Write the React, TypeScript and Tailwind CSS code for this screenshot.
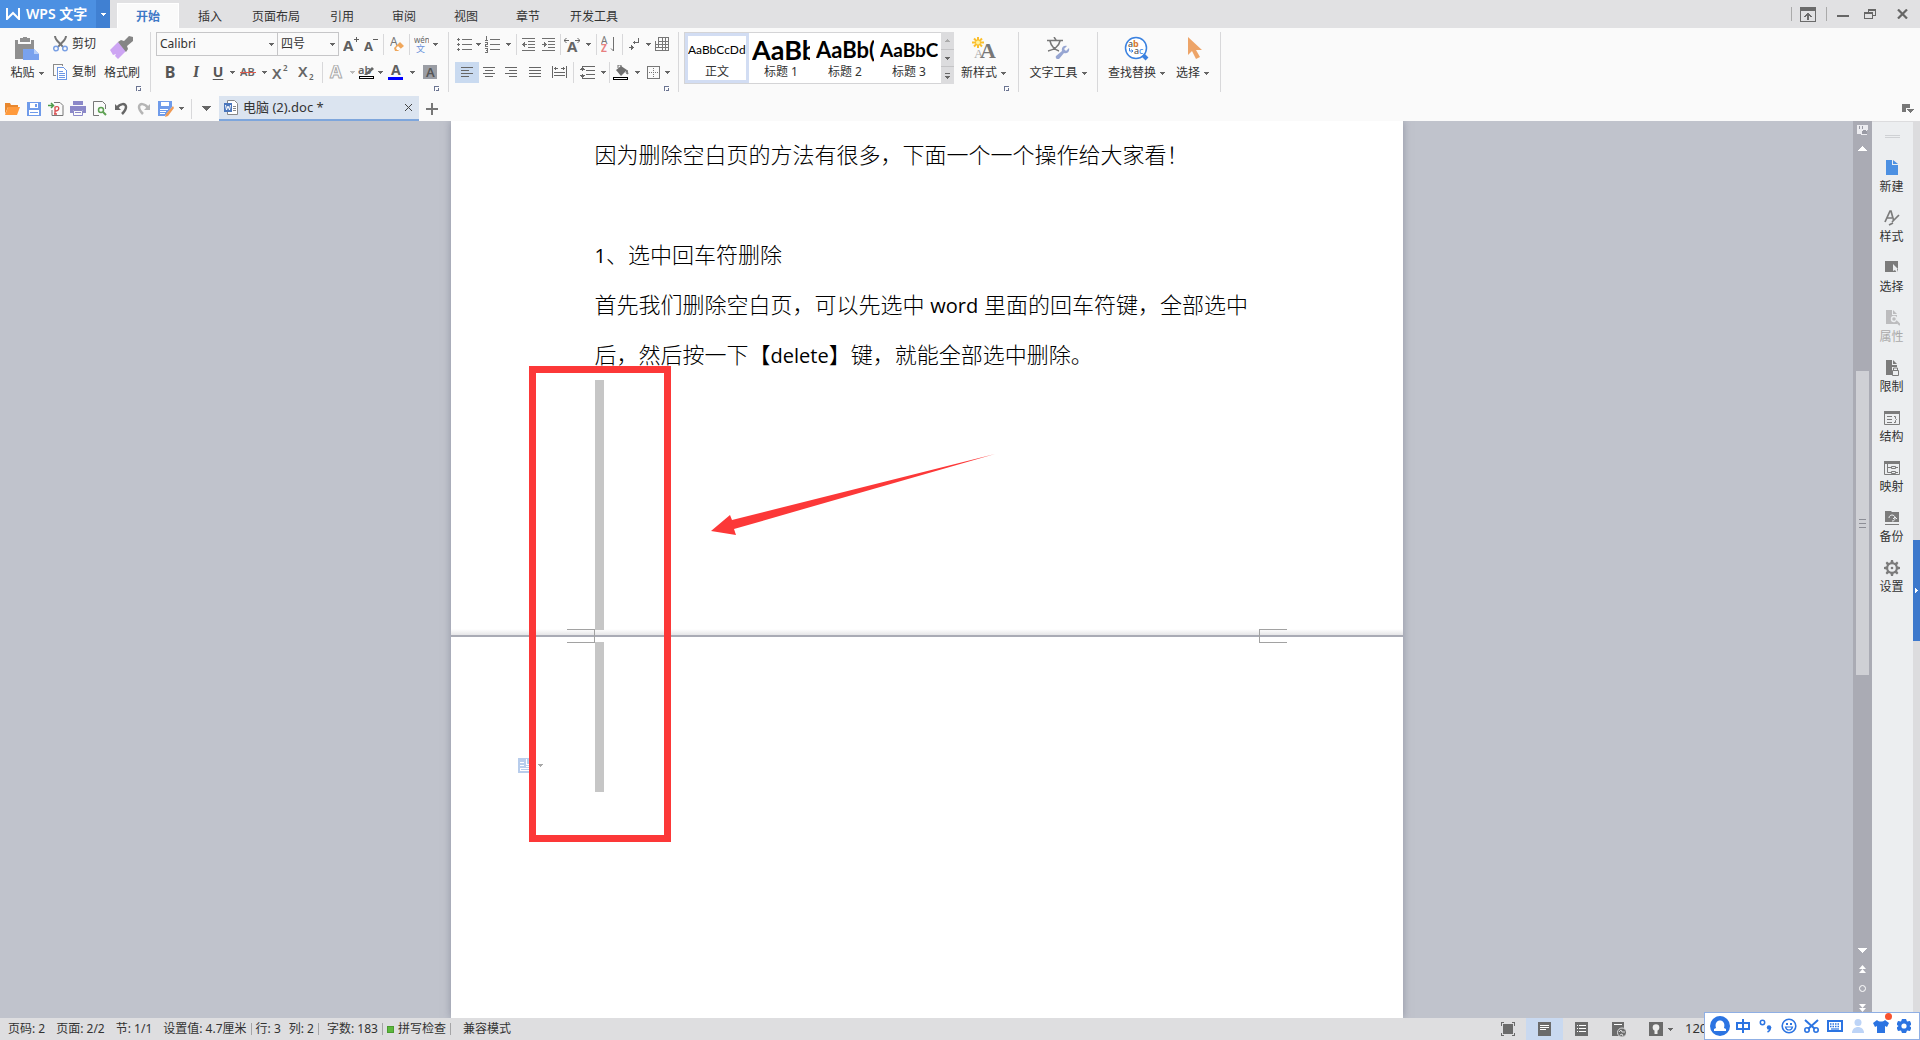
import type { ReactNode } from 'react';
import clsx from 'clsx';

const tabs = [
  { name: '开始', active: true },
  { name: '插入' },
  { name: '页面布局', wide: true },
  { name: '引用' },
  { name: '审阅' },
  { name: '视图' },
  { name: '章节' },
  { name: '开发工具', wide: true },
];

interface SvgProps {
  w: number;
  h: number;
  crisp?: boolean;
  className?: string;
  children: ReactNode;
}

function Svg({ w, h, crisp, className, children }: SvgProps) {
  return (
    <svg
      width={w}
      height={h}
      viewBox={`0 0 ${w} ${h}`}
      shapeRendering={crisp ? 'crispEdges' : undefined}
      fill="none"
      className={clsx('shrink-0', className)}
      aria-hidden="true"
    >
      {children}
    </svg>
  );
}

function Caret({ color = '#666' }: { color?: string }) {
  return (
    <Svg w={5} h={3} crisp>
      <path d="M0 0h5v1H0zM1 1h3v1H1zM2 2h1v1H2z" fill={color} />
    </Svg>
  );
}

function Tool({ label, className, children }: { label: string; className: string; children: ReactNode }) {
  return (
    <button type="button" aria-label={label} className={clsx('flex h-[21px] shrink-0 items-center justify-center', className)}>
      {children}
    </button>
  );
}

function More({ wide, faded }: { wide?: boolean; faded?: boolean }) {
  return (
    <Tool label="更多" className={wide ? 'w-3' : 'w-2'}>
      <Caret color={faded ? '#bbb' : '#666'} />
    </Tool>
  );
}

function Bar({ wide }: { wide?: boolean }) {
  return (
    <div className={clsx('flex h-[21px] shrink-0 justify-center', wide ? 'w-2' : 'w-1')}>
      <div className="w-px bg-[#d8d8da]" />
    </div>
  );
}

function Group({ className, launcher, children }: { className: string; launcher?: boolean; children: ReactNode }) {
  return (
    <div className={clsx('flex h-[60px] shrink-0 flex-col border-r border-[#d8d8da]', className)}>
      <div className="flex h-[53px] items-start">{children}</div>
      {launcher && (
        <button type="button" aria-label="对话框" className="mt-px mr-2 self-end">
          <Svg w={6} h={6} crisp>
            <path d="M0 0h5v1H1v4H0zM4 2h1v3H2V4h2z" fill="#6a7391" />
          </Svg>
        </button>
      )}
    </div>
  );
}

function BigButton({ label, caret, icon, className }: { label: string; caret?: boolean; icon: ReactNode; className?: string }) {
  return (
    <button type="button" className={clsx('flex shrink-0 flex-col items-center pt-1', className)}>
      <span className="flex h-6 items-center justify-center">{icon}</span>
      <span className="mt-[5px] flex items-center gap-1 leading-4 whitespace-nowrap">
        {label}
        {caret && <Caret />}
      </span>
    </button>
  );
}

function Combo({ label, value, options, className }: { label: string; value: string; options: string[]; className: string }) {
  return (
    <div className={clsx('relative h-6', className)}>
      <select
        aria-label={label}
        defaultValue={value}
        className="h-6 w-full appearance-none border border-[#c6c6c8] bg-[#fafafa] pl-[3px] text-[#333] outline-none"
      >
        {options.map((o) => (
          <option key={o}>{o}</option>
        ))}
      </select>
      <span className="pointer-events-none absolute top-[11px] right-1">
        <Caret />
      </span>
    </div>
  );
}

function TitleBar() {
  return (
    <header className="flex h-7 shrink-0 bg-[#e1e1e3]">
      <button type="button" className="flex w-24 items-center gap-[6px] bg-[#4c90e2] pl-[6px] text-sm font-semibold text-white">
        <Svg w={14} h={12}>
          <path d="M1 0v11l6-6 6 6V0" stroke="#fff" strokeWidth="2" />
        </Svg>
        <span className="whitespace-nowrap">WPS 文字</span>
      </button>
      <button type="button" aria-label="主菜单" className="flex w-[14px] items-center justify-center bg-[#4080d2]">
        <Caret color="#fff" />
      </button>
      <nav className="ml-[7px] flex items-end">
        {tabs.map((tab) => (
          <button
            key={tab.name}
            type="button"
            className={clsx(
              'flex h-[25px] items-center justify-center pt-[2px] whitespace-nowrap',
              tab.wide ? 'w-[70px]' : 'w-[62px]',
              tab.active ? 'border-x border-t border-white bg-[#fafafa] font-bold text-[#3d78c6]' : 'text-[#333]',
            )}
          >
            {tab.name}
          </button>
        ))}
      </nav>
      <div className="ml-auto flex items-center">
        <div className="h-[14px] w-px bg-[#aaa]" />
        <button type="button" aria-label="隐藏功能区" className="mr-[10px] ml-2">
          <Svg w={16} h={15} crisp>
            <path d="M.5 .5h15v14H.5z" stroke="#6b6b6b" />
            <path d="M0 0h16v4H0zM7 6h2v7H7zM6 7h4v1H6zM5 8h6v1H5zM4 9h2v1H4zM10 9h2v1h-2z" fill="#6b6b6b" />
          </Svg>
        </button>
        <div className="h-[14px] w-px bg-[#aaa]" />
        <button type="button" aria-label="最小化" className="ml-[10px] flex h-[14px] items-center">
          <Svg w={12} h={10} crisp>
            <path d="M0 6h12v2H0z" fill="#666" />
          </Svg>
        </button>
        <button type="button" aria-label="还原" className="ml-[15px]">
          <Svg w={12} h={10} crisp>
            <path d="M4 0h8v7H9V6h2V2H5v1H4zM0 3h9v7H0zM1 5v4h7V5z" fill="#666" fillRule="evenodd" />
          </Svg>
        </button>
        <button type="button" aria-label="关闭" className="mr-3 ml-[21px]">
          <Svg w={11} h={10}>
            <path d="M1 .5l9 9M10 .5l-9 9" stroke="#666" strokeWidth="2.200" />
          </Svg>
        </button>
      </div>
    </header>
  );
}

function ClipboardGroup() {
  return (
    <Group launcher className="w-[151px] pl-2">
      <BigButton
        label="粘贴"
        caret
        className="w-[38px]"
        icon={
          <Svg w={24} h={23}>
            <path d="M0 3h3v4h13V3h3v9H9v10H0z" fill="#8f8f8f" />
            <path d="M5 1h3V0h4v1h3v4H5z" fill="#8f8f8f" />
            <path d="M8 12h11l5 5v6H8z" fill="#79a2ee" />
            <path d="M19 12v5h5z" fill="#b9d0f8" />
          </Svg>
        }
      />
      <div className="mr-2 ml-[7px] flex flex-col gap-1">
        <button type="button" className="flex h-6 items-center gap-1 whitespace-nowrap">
          <Svg w={15} h={16}>
            <path d="M2 0c0 4 4 6 8 11M13 0c0 4-4 6-8 11" stroke="#757575" strokeWidth="2" />
            <circle cx="3" cy="12.500" r="2.300" stroke="#7aa0e4" strokeWidth="1.500" />
            <circle cx="12" cy="12.500" r="2.300" stroke="#7aa0e4" strokeWidth="1.500" />
          </Svg>
          剪切
        </button>
        <button type="button" className="flex h-6 items-center gap-1 whitespace-nowrap">
          <Svg w={15} h={16} crisp>
            <path d="M9.500 2V.5h-9v11H3" stroke="#8a8a8a" />
            <path d="M4.500 3.500h6l3 3v9h-9z" fill="#fff" stroke="#6d97e4" />
            <path d="M6 7.500h4M6 9.500h6M6 11.500h6M6 13.500h6" stroke="#6d97e4" />
          </Svg>
          复制
        </button>
      </div>
      <BigButton
        label="格式刷"
        icon={
          <Svg w={24} h={24}>
            <path d="M0 14l8-8 9 8-9 9-3-3 1-2-3 1z" fill="#cda5f3" />
            <path d="M8 6l3-2 3 1 5-5 4 1v4l-6 5 1 3-2 3z" fill="#858585" />
          </Svg>
        }
      />
    </Group>
  );
}

function FontGroup() {
  return (
    <Group launcher className="w-[298px] pl-[5px]">
      <div className="flex flex-col gap-1 text-[#555]">
        <div className="flex h-6 items-center">
          <Combo label="字体" value="Calibri" options={['Calibri', '宋体', '微软雅黑']} className="w-[122px]" />
          <Combo label="字号" value="四号" options={['四号', '小四', '五号']} className="-ml-px w-[62px]" />
          <Tool label="增大字号" className="w-6">
            <Svg w={16} h={16}>
              <text x="0" y="15" fontSize="15" fontWeight="700" fill="#5f5f5f">A</text>
              <path d="M11 3.500h5M13.500 1v5" stroke="#5f5f5f" />
            </Svg>
          </Tool>
          <Tool label="减小字号" className="w-4">
            <Svg w={15} h={16}>
              <text x="0" y="15" fontSize="13" fontWeight="700" fill="#5f5f5f">A</text>
              <path d="M9 3.500h5" stroke="#5f5f5f" />
            </Svg>
          </Tool>
          <Bar wide />
          <Tool label="清除格式" className="w-5">
            <Svg w={15} h={16}>
              <text x="0" y="10" fontSize="12" fill="#777">A</text>
              <path d="M4 12l6-6 4 4-6 5H5z" fill="#f0a75c" />
              <path d="M6 12l2-2 3 3-2 1H7z" fill="#fff" />
            </Svg>
          </Tool>
          <Bar />
          <Tool label="拼音指南" className="w-5">
            <Svg w={15} h={17}>
              <text x="0" y="7" fontSize="8" fill="#666">wén</text>
              <text x="2" y="16" fontSize="9" fill="#6d93dc">文</text>
            </Svg>
          </Tool>
          <More />
        </div>
        <div className="flex h-6 items-center">
          <Tool label="加粗" className="w-7 text-base font-bold">B</Tool>
          <Tool label="倾斜" className="w-6 font-serif text-base font-bold italic">I</Tool>
          <Tool label="下划线" className="w-5 text-sm font-bold underline underline-offset-2">U</Tool>
          <More />
          <Tool label="删除线" className="w-6">
            <Svg w={16} h={12}>
              <text x="0" y="10" fontSize="11" fontWeight="600" fill="#666">AB</text>
              <path d="M0 6.500h16" stroke="#e05a50" />
            </Svg>
          </Tool>
          <More />
          <Tool label="上标" className="w-6">
            <Svg w={16} h={16}>
              <text x="0" y="15" fontSize="15" fontWeight="600" fill="#666">X</text>
              <text x="11" y="7" fontSize="8" fontWeight="600" fill="#666">2</text>
            </Svg>
          </Tool>
          <Tool label="下标" className="w-7">
            <Svg w={16} h={16}>
              <text x="0" y="13" fontSize="15" fontWeight="600" fill="#666">X</text>
              <text x="11" y="16" fontSize="8" fontWeight="600" fill="#666">2</text>
            </Svg>
          </Tool>
          <Bar />
          <Tool label="文字效果" className="w-6">
            <Svg w={15} h={15}>
              <text x="1" y="13" fontSize="17" fontWeight="700" stroke="#aaa" fill="#fff">A</text>
            </Svg>
          </Tool>
          <More faded />
          <Tool label="突出显示" className="w-5">
            <Svg w={17} h={15}>
              <text x="0" y="9" fontSize="11" fontWeight="600" fill="#666">ab</text>
              <path d="M7 9l7-7 2 2-7 6H6z" fill="#666" />
              <path d="M1 11.500h14v2H1z" stroke="#000" fill="#fff" shapeRendering="crispEdges" />
            </Svg>
          </Tool>
          <More />
          <Tool label="字体颜色" className="w-6">
            <Svg w={16} h={15}>
              <text x="3" y="10" fontSize="14" fontWeight="700" fill="#5f5f5f">A</text>
              <path d="M0 12h15v3H0z" fill="#00f" />
            </Svg>
          </Tool>
          <More />
          <Tool label="字符底纹" className="w-7">
            <Svg w={14} h={14}>
              <path d="M0 0h14v14H0z" fill="#9a9da4" />
              <text x="3" y="12" fontSize="13" fontWeight="600" fill="#555">A</text>
            </Svg>
          </Tool>
        </div>
      </div>
    </Group>
  );
}

function ParagraphGroup() {
  return (
    <Group launcher className="w-[230px] pl-[5px]">
      <div className="flex flex-col gap-1">
        <div className="flex h-6 items-center">
          <Tool label="项目符号" className="w-5">
            <Svg w={15} h={13} crisp>
              <path d="M5 1.500h10M5 6.500h10M5 11.500h10M0 1.500h3M1.500 0v3M0 6.500h3M1.500 5v3M0 11.500h3M1.500 10v3" stroke="#707070" />
            </Svg>
          </Tool>
          <More />
          <Tool label="编号" className="w-5">
            <Svg w={15} h={17} crisp>
              <path d="M5 3.500h10M5 8.500h10M5 13.500h10M1.500 0v4M0 4.500h3M0 6.500h2.500v2H.5v1.500h2.500M0 12.500h2.500v4H0M1 14.500h2" stroke="#707070" />
            </Svg>
          </Tool>
          <More wide />
          <Bar />
          <Tool label="减少缩进" className="w-5">
            <Svg w={13} h={13} crisp>
              <path d="M0 .5h13M6 3.500h7M6 6.500h7M6 9.500h7M0 12.500h13M0 6.500h5M1.500 5v3M2.500 4v5" stroke="#707070" />
            </Svg>
          </Tool>
          <Tool label="增加缩进" className="w-5">
            <Svg w={13} h={13} crisp>
              <path d="M0 .5h13M6 3.500h7M6 6.500h7M6 9.500h7M0 12.500h13M0 6.500h5M3.500 5v3M2.500 4v5" stroke="#707070" />
            </Svg>
          </Tool>
          <Bar />
          <Tool label="字符缩放" className="w-5">
            <Svg w={16} h={15}>
              <text x="3" y="15" fontSize="15" fontWeight="700" fill="#666">A</text>
              <path d="M0 3.500h5M2.500 1L0 3.500 2.500 6M11 3.500h5M13.500 1L16 3.500 13.500 6" stroke="#666" />
            </Svg>
          </Tool>
          <More wide />
          <Bar />
          <Tool label="排序" className="w-5">
            <Svg w={15} h={17}>
              <text x="0" y="8" fontSize="10" fill="#777">A</text>
              <text x="0" y="16" fontSize="10" fontWeight="700" fill="#e88080">Z</text>
              <path d="M12.500 1v14M10 12.500l2.500 2.500" stroke="#707070" />
            </Svg>
          </Tool>
          <Bar wide />
          <Tool label="段落标记" className="w-4">
            <Svg w={11} h={13} crisp>
              <path d="M9.500 0v4.500H4M5.500 3v3M0 9.500h5M3.500 8v3M2.500 7v5" stroke="#666" />
            </Svg>
          </Tool>
          <More wide />
          <Tool label="表格" className="w-4">
            <Svg w={14} h={14} crisp>
              <path d="M3.500 .5h10v10h-10zM7.500 .5v13M10.500 .5v13M3.500 4.500h10M.5 7.500h13M.5 10.500h13M.5 4v9.500h13V10" stroke="#777" />
            </Svg>
          </Tool>
        </div>
        <div className="flex h-6 items-center pl-px">
          <Tool label="左对齐" className="w-6 bg-[#c9daf0]">
            <Svg w={12} h={10} crisp>
              <path d="M0 .5h12M0 3.500h8M0 6.500h12M0 9.500h8" stroke="#666" />
            </Svg>
          </Tool>
          <Tool label="居中" className="w-5">
            <Svg w={12} h={10} crisp>
              <path d="M0 .5h12M2 3.500h8M0 6.500h12M2 9.500h8" stroke="#666" />
            </Svg>
          </Tool>
          <Tool label="右对齐" className="w-6">
            <Svg w={12} h={10} crisp>
              <path d="M0 .5h12M4 3.500h8M0 6.500h12M4 9.500h8" stroke="#666" />
            </Svg>
          </Tool>
          <Tool label="两端对齐" className="w-6">
            <Svg w={12} h={10} crisp>
              <path d="M0 .5h12M0 3.500h12M0 6.500h12M0 9.500h12" stroke="#666" />
            </Svg>
          </Tool>
          <Tool label="分散对齐" className="w-6">
            <Svg w={15} h={12} crisp>
              <path d="M.5 0v12M14.500 0v12M2 2.500h4M9 2.500h4M3.500 1v3M11.500 1v3M2 6.500h11M2 9.500h11" stroke="#666" />
            </Svg>
          </Tool>
          <Bar />
          <Tool label="行距" className="w-6">
            <Svg w={15} h={13} crisp>
              <path d="M2.500 0v5M1 2.500h3M2.500 8v5M1 10.500h3M0 3.500h5M0 9.500h5M3 .5h12M6 4.500h9M6 8.500h9M3 12.500h12" stroke="#666" />
            </Svg>
          </Tool>
          <More />
          <Bar />
          <Tool label="底纹颜色" className="w-5">
            <Svg w={16} h={15}>
              <path d="M3 5l5-4 6 4-6 6z" fill="#707070" />
              <path d="M5 3V0h3v3M14 5l1 4-2-1z" stroke="#707070" />
              <path d="M.5 12.500h14v2H.5z" fill="#fff" stroke="#000" shapeRendering="crispEdges" />
            </Svg>
          </Tool>
          <More wide />
          <Tool label="边框" className="w-5">
            <Svg w={13} h={13} crisp>
              <path d="M.5 .5h12v12H.5z" stroke="#777" />
              <path d="M6.500 2v9M2 6.500h9" stroke="#777" strokeDasharray="1 1" />
            </Svg>
          </Tool>
          <More />
        </div>
      </div>
    </Group>
  );
}

const styles = [
  { name: '正文', sample: 'AaBbCcDd', font: 'text-[12px]', active: true },
  { name: '标题 1', sample: 'AaBb', font: 'text-[27px] font-bold' },
  { name: '标题 2', sample: 'AaBb(', font: 'text-[22px] font-bold' },
  { name: '标题 3', sample: 'AaBbC', font: 'text-[19px] font-bold' },
];

function StyleGroup() {
  return (
    <Group launcher className="w-[340px] pl-[5px]">
      <div className="flex h-[52px] border border-r-0 border-[#d4d4d6] bg-white">
        {styles.map((s) => (
          <button
            key={s.name}
            type="button"
            className={clsx(
              'flex w-16 flex-col items-center overflow-hidden border-3 whitespace-nowrap',
              s.active ? 'border-[#d2ddf3]' : 'border-white',
            )}
          >
            <span className={clsx("flex h-7 w-full items-center overflow-hidden font-['Lato'] text-black", s.font)}>{s.sample}</span>
            <span className="mt-px leading-4">{s.name}</span>
          </button>
        ))}
      </div>
      <div className="flex h-[52px] w-[13px] shrink-0 flex-col gap-px bg-[#c4c4c6]">
        <button type="button" aria-label="上一行" className="flex flex-1 items-center justify-center bg-[#dcdcde]">
          <Svg w={5} h={3} crisp>
            <path d="M2 0h1v1H2zM1 1h3v1H1zM0 2h5v1H0z" fill="#aaa" />
          </Svg>
        </button>
        <button type="button" aria-label="下一行" className="flex flex-1 items-center justify-center bg-[#dcdcde]">
          <Caret />
        </button>
        <button type="button" aria-label="展开" className="flex flex-1 flex-col items-center justify-center gap-[2px] bg-[#dcdcde]">
          <span className="h-px w-[5px] bg-[#666]" />
          <Caret />
        </button>
      </div>
      <BigButton
        label="新样式"
        caret
        className="ml-[7px]"
        icon={
          <Svg w={24} h={22}>
            <path d="M6 0v11M0 5.500h12M2 1.500l8 8M10 1.500l-8 8" stroke="#fbbf2d" strokeWidth="2" />
            <circle cx="6" cy="5.500" r="2" fill="#fff3a0" />
            <text x="2" y="21" fontSize="13" fontFamily="Liberation Serif" fill="#aaa">A</text>
            <text x="8" y="21" fontSize="22" fontFamily="Liberation Serif" fontWeight="700" fill="#777">A</text>
          </Svg>
        }
      />
    </Group>
  );
}

function Ribbon() {
  return (
    <section className="flex h-[68px] shrink-0 bg-[#fafafa] pt-1 text-[#333]">
      <ClipboardGroup />
      <FontGroup />
      <ParagraphGroup />
      <StyleGroup />
      <Group className="w-[79px] items-center">
        <BigButton
          label="文字工具"
          caret
          icon={
            <Svg w={24} h={22}>
              <path d="M1 3.500h16M8 0l2 3M4 4c1 5 5 9 9 10M14 4c-1 5-6 9-12 10" stroke="#777" strokeWidth="1.500" />
              <path d="M10 19l6-5c-1-4 2-6 5-5l-3 3 2 2 3-3c1 4-2 6-5 5l-5 6c-2 1-4-1-3-3z" fill="#97a6d2" />
            </Svg>
          }
        />
      </Group>
      <Group className="w-[123px] pl-[10px]">
        <BigButton
          label="查找替换"
          caret
          icon={
            <Svg w={25} h={25}>
              <circle cx="12" cy="12" r="10.500" stroke="#3b82e0" strokeWidth="1.500" fill="#fff" />
              <path d="M19 19l4 4" stroke="#3b82e0" strokeWidth="4" />
              <text x="4" y="11" fontSize="9" fill="#444">a</text>
              <text x="9" y="11" fontSize="9" fontWeight="700" fill="#d87830">b</text>
              <text x="10" y="18" fontSize="9" fill="#444">a</text>
              <text x="15" y="18" fontSize="9" fill="#3b82e0">c</text>
              <path d="M5.500 12v3H9M7.500 13.500L9 15l-1.500 1.500" stroke="#3b82e0" />
            </Svg>
          }
        />
        <BigButton
          label="选择"
          caret
          className="ml-[11px]"
          icon={
            <Svg w={18} h={23}>
              <path d="M4 0v18l4-4 4 8 4-2-4-7h6z" fill="#eda468" />
            </Svg>
          }
        />
      </Group>
    </section>
  );
}

function QuickBar() {
  return (
    <section className="flex h-[25px] shrink-0 items-center bg-[#fafafa] pl-1 text-[#333]">
      <div className="flex items-center gap-[6px]">
        <button type="button" aria-label="打开">
          <Svg w={16} h={14}>
            <path d="M1 12V1h5l1 2h7v2H4z" fill="#e8872e" />
            <path d="M4 5h12l-3 8H1z" fill="#ff9a3c" />
          </Svg>
        </button>
        <button type="button" aria-label="保存" className="px-px">
          <Svg w={14} h={14} crisp>
            <path d="M0 0h14v14H0z" fill="#6f9bea" />
            <path d="M3 1h8v5H3zM2 8h10v5H2z" fill="#fff" />
            <path d="M8 2h2v3H8zM3 10h8v1H3z" fill="#6f9bea" />
          </Svg>
        </button>
        <button type="button" aria-label="输出为PDF">
          <Svg w={16} h={16}>
            <path d="M6 1.500h6l3 3v10H4V9" stroke="#777" />
            <path d="M0 4.500h5M3 2l2.500 2.500L3 7" stroke="#4a9a48" strokeWidth="1.500" />
            <path d="M7 13V6c5-2 5 4 0 4M6 13h3" stroke="#d8484a" strokeWidth="1.300" />
          </Svg>
        </button>
        <button type="button" aria-label="打印">
          <Svg w={16} h={15}>
            <path d="M3 0h10v4H3zM0 5h16v7H0z" fill="#8b88c8" />
            <path d="M3 9h10v6H3z" fill="#fafafa" />
            <path d="M3.500 9.500h9v5h-9zM5 11.500h6" stroke="#8b88c8" />
          </Svg>
        </button>
        <button type="button" aria-label="打印预览" className="px-px">
          <Svg w={14} h={15}>
            <path d="M6 14.500H.5V.5h9l3 3V8" stroke="#777" />
            <circle cx="8" cy="9" r="2.500" stroke="#5da052" strokeWidth="1.500" />
            <path d="M10 11l3 3" stroke="#5da052" strokeWidth="2" />
          </Svg>
        </button>
        <button type="button" aria-label="撤销" className="px-px">
          <Svg w={14} h={13}>
            <path d="M2 6c3-5 9-5 9-1 0 3-2 5-4 7" stroke="#666" strokeWidth="2.500" />
            <path d="M0 2v6h6z" fill="#666" />
          </Svg>
        </button>
        <button type="button" aria-label="恢复" className="px-px">
          <Svg w={14} h={13}>
            <path d="M11 6C8 1 2 1 2 5c0 3 2 5 4 7" stroke="#b5b5b5" strokeWidth="2.500" />
            <path d="M13 2v6H7z" fill="#b5b5b5" />
          </Svg>
        </button>
        <button type="button" aria-label="另存为" className="flex items-center gap-[5px]">
          <Svg w={16} h={16}>
            <path d="M0 0h14v6l-7 9H0z" fill="#6f9bea" />
            <path d="M3 1h8v4H3zM2 8h8v1H2zM2 10h6v1H2zM2 12h5v1H2z" fill="#fff" />
            <path d="M15 5L8 13l-1 3 3-1 6-8z" fill="#ef9a54" />
          </Svg>
          <Caret />
        </button>
      </div>
      <div className="ml-[7px] h-5 w-px bg-[#d8d8da]" />
      <button type="button" aria-label="更多命令" className="mr-2 ml-[10px]">
        <Svg w={9} h={5} crisp>
          <path d="M0 0h9v1H0zM1 1h7v1H1zM2 2h5v1H2zM3 3h3v1H3zM4 4h1v1H4z" fill="#666" />
        </Svg>
      </button>
      <div className="flex h-[25px] w-[200px] items-center border-b-2 border-[#7ea6dc] bg-[#dbe4f0] pl-[5px]">
        <Svg w={14} h={15}>
          <path d="M3.500 .5h7l3 3v11h-10z" fill="#fff" stroke="#888" />
          <path d="M0 3h8v9H0z" fill="#4a76bc" />
          <path d="M1.500 5l1 5 1.500-4 1.500 4 1-5" stroke="#fff" />
          <path d="M9 6.500h3M9 8.500h3M9 10.500h3" stroke="#888" />
        </Svg>
        <span className="ml-[5px] text-[13px] whitespace-nowrap">电脑 (2).doc *</span>
        <button type="button" aria-label="关闭文档" className="mr-[7px] ml-auto">
          <Svg w={7} h={7}>
            <path d="M0 0l7 7M7 0L0 7" stroke="#444" />
          </Svg>
        </button>
      </div>
      <button type="button" aria-label="新建标签" className="ml-[7px]">
        <Svg w={12} h={12} crisp>
          <path d="M5 0h2v12H5zM0 5h12v2H0z" fill="#777" />
        </Svg>
      </button>
      <button type="button" aria-label="窗口列表" className="mr-[6px] ml-auto">
        <Svg w={12} h={10} crisp>
          <path d="M0 0h8v4H4v4H0zM5 5h7v1h-1v1h-1v1H9v1H8V8H7V7H6V6H5z" fill="#777" />
        </Svg>
      </button>
    </section>
  );
}

function Latin({ children }: { children: ReactNode }) {
  return <span className="font-['Open_Sans'] text-[20px] leading-none font-normal">{children}</span>;
}

function Page() {
  return (
    <article className="relative mx-auto flex h-full w-[952px] flex-col bg-white shadow-[0_0_8px_rgba(110,115,135,0.6)]">
      <div className="flex h-[514px] shrink-0 flex-col bg-linear-to-t from-[#e6e6e8] to-white to-[6px] px-36 pt-2">
        <div className="mb-px h-[250px] text-[22px] leading-[50px] font-light text-black">
          <p>因为删除空白页的方法有很多，下面一个一个操作给大家看！</p>
          <p className="h-[50px]" />
          <p>
            <Latin>1</Latin>、选中回车符删除
          </p>
          <p>
            首先我们删除空白页，可以先选中 <Latin>word</Latin> 里面的回车符键，全部选中
            <br />
            后，然后按一下【<Latin>delete</Latin>】键，就能全部选中删除。
          </p>
        </div>
        <div className="h-[250px] w-[9px] shrink-0 bg-[#c6c6c6]" />
      </div>
      <div className="h-[2px] shrink-0 bg-[#a9abb5]" />
      <div className="grow px-36 pt-[5px]">
        <div className="h-[150px] w-[9px] bg-[#c6c6c6]" />
      </div>

      {/* page margin corners */}
      <div className="absolute top-[508px] left-[116px] h-[14px] w-7 border-y border-r border-[#a2a2a2]" />
      <div className="absolute top-[508px] right-[116px] h-[14px] w-7 border-y border-l border-[#a2a2a2]" />

      {/* paste options */}
      <div className="absolute top-[637px] left-[67px] flex items-center gap-[5px]">
        <Svg w={15} h={15} crisp>
          <path d="M0 0h10l5 5v10H0z" fill="#b8cdec" />
          <path d="M2 4.500h4M2 7.500h4M2 10.500h10v2H2zM8.500 1v5H15M8 8.500h4" stroke="#fff" />
        </Svg>
        <Caret color="#a8a8a8" />
      </div>

      {/* annotations */}
      <div className="absolute top-[245px] left-[78px] h-[476px] w-[142px] border-7 border-[#fc3838]" />
      <Svg w={286} h={84} className="absolute top-[332px] left-[259px]">
        <path d="M1 78L20 62l2 5L285 1 24 76l2 6z" fill="#fc3838" />
      </Svg>
    </article>
  );
}

function ScrollBar() {
  return (
    <div className="flex w-[19px] shrink-0 flex-col items-center bg-[#aaabb4] pt-1">
      <Svg w={11} h={11} crisp>
        <path d="M0 0h11v5h-1v5H4V9H0z" fill="#ececf0" />
        <path d="M2 1h1v3H2zM5 1h1v3H5zM5 6h1V5h3v1h1v3H5z" fill="#999aa4" />
      </Svg>
      <Svg w={9} h={5} crisp className="mt-[10px]">
        <path d="M4 0h1v1H4zM3 1h3v1H3zM2 2h5v1H2zM1 3h7v1H1zM0 4h9v1H0z" fill="#fff" />
      </Svg>
      <div className="mt-1 mb-1 flex w-[13px] grow flex-col">
        <div className="flex-[216]" />
        <div className="flex flex-[305] flex-col items-center justify-center gap-[3px] bg-[#cfd0d5]">
          <span className="h-px w-[7px] bg-[#8d8e96]" />
          <span className="h-px w-[7px] bg-[#8d8e96]" />
          <span className="h-px w-[7px] bg-[#8d8e96]" />
        </div>
        <div className="flex-[269]" />
      </div>
      <div className="flex flex-col items-center gap-3 pb-[6px]">
        <Svg w={9} h={5} crisp>
          <path d="M0 0h9v1H0zM1 1h7v1H1zM2 2h5v1H2zM3 3h3v1H3zM4 4h1v1H4z" fill="#fff" />
        </Svg>
        <Svg w={7} h={8}>
          <path d="M3.500 0L7 4H0zM3.500 4L7 8H0z" fill="#fff" />
        </Svg>
        <Svg w={7} h={7}>
          <circle cx="3.500" cy="3.500" r="3" stroke="#fff" />
        </Svg>
        <Svg w={7} h={8}>
          <path d="M3.500 4L7 0H0zM3.500 8L7 4H0z" fill="#fff" />
        </Svg>
      </div>
    </div>
  );
}

const gear = 'M8 0l1 0 .5 2.200 1.600.7L13 1.600 14.400 3l-1.300 1.900.7 1.600L16 7v2l-2.200.5-.7 1.600 1.300 1.900L13 14.400l-1.900-1.300-1.600.7L9 16H7l-.5-2.200-1.600-.7L3 14.400 1.600 13l1.300-1.900-.7-1.600L0 9V7l2.200-.5.7-1.600L1.600 3 3 1.600l1.900 1.300 1.600-.7L7 0z';

const sideItems = [
  {
    name: '新建',
    icon: (
      <>
        <path d="M2 0h6v5h6v10H2z" fill="#4c90e2" />
        <path d="M9 0l5 4H9z" fill="#4c90e2" />
      </>
    ),
  },
  {
    name: '样式',
    icon: <path d="M1 12L6 1h1l2.500 9M3 8h5M15 5l-7 7M9 13l-4 2" stroke="#7b7b7b" strokeWidth="1.700" />,
  },
  {
    name: '选择',
    icon: (
      <>
        <path d="M1 1h13v11H1z" fill="#7b7b7b" />
        <path d="M9 4v7l2-1 2 3 1-1-1-3h1z" fill="#eceef0" />
      </>
    ),
  },
  {
    name: '属性',
    off: true,
    icon: (
      <>
        <path d="M2 0h6v5h5v9H2z" fill="#bcbcbe" />
        <path d="M9 0l4 4H9z" fill="#bcbcbe" />
        <circle cx="10" cy="9" r="2.500" stroke="#eceef0" strokeWidth="1.500" />
        <path d="M12 11l4 4" stroke="#bcbcbe" strokeWidth="2" />
      </>
    ),
  },
  {
    name: '限制',
    icon: (
      <>
        <path d="M2 0h6v5h5v2H8v8H2z" fill="#7b7b7b" />
        <path d="M9 0l4 4H9z" fill="#7b7b7b" />
        <path d="M8.500 10.500h6v5h-6zM9.500 10V8h4v2" stroke="#7b7b7b" />
      </>
    ),
  },
  {
    name: '结构',
    icon: (
      <>
        <path d="M.5 1.500h15v13H.5z" stroke="#7b7b7b" />
        <path d="M0 1h16v3H0z" fill="#7b7b7b" />
        <path d="M3 6.500h5M3 9.500h5M3 12.500h5M10 6.500h1.500v2l1 1-1 1v2H10" stroke="#7b7b7b" />
      </>
    ),
  },
  {
    name: '映射',
    icon: (
      <>
        <path d="M.5 1.500h15v13H.5z" stroke="#7b7b7b" />
        <path d="M0 1h16v3H0z" fill="#7b7b7b" />
        <path d="M3.500 4v8.500H7M3.500 7.500H7M7.500 6.500h4v2h-4zM7.500 11.500h4v2h-4zM12 7.500h2M12 12.500h2" stroke="#7b7b7b" />
      </>
    ),
  },
  {
    name: '备份',
    icon: (
      <>
        <path d="M1 1h6l1 1h7v10H1z" fill="#7b7b7b" />
        <path d="M5 8c0-4 6-4 6 0M11 8c0 2-1 3-3 3M9 9l2-2 2 2" stroke="#eceef0" />
        <path d="M1 14.500h14" stroke="#7b7b7b" />
      </>
    ),
  },
  {
    name: '设置',
    icon: (
      <>
        <path d={gear} fill="#7b7b7b" />
        <circle cx="8" cy="8" r="3.800" fill="#eceef0" />
        <circle cx="8" cy="8" r="1.300" fill="#7b7b7b" />
      </>
    ),
  },
];

function SidePanel() {
  return (
    <aside className="flex shrink-0">
      <div className="flex w-[41px] flex-col items-center border-t border-[#dcdcde] bg-[#eceef0] text-[#333]">
        <div className="mt-[13px] mb-[17px] h-[3px] w-[15px] shrink-0 border-y border-[#cfd1d4]" />
        {sideItems.map((item) => (
          <button
            key={item.name}
            type="button"
            disabled={item.off}
            className={clsx('flex h-[50px] w-full flex-col items-center gap-[3px] pt-[5px] pr-[2px] leading-4', item.off && 'text-[#aaa]')}
          >
            <Svg w={16} h={16}>{item.icon}</Svg>
            {item.name}
          </button>
        ))}
      </div>
      <div className="flex w-[7px] flex-col justify-center bg-[#dcdcde]">
        <button type="button" aria-label="展开侧栏" className="mt-[42px] flex h-[101px] items-center justify-center bg-[#3c78cc]">
          <Svg w={3} h={5} crisp>
            <path d="M0 0h1v5H0zM1 1h1v3H1zM2 2h1v1H2z" fill="#fff" />
          </Svg>
        </button>
      </div>
    </aside>
  );
}

function StatusSep() {
  return <span className="h-3 w-px bg-[#a5a5a7]" />;
}

function StatusBar() {
  return (
    <footer className="flex h-[22px] shrink-0 items-center bg-[#dedee0] pl-2 whitespace-nowrap text-[#333]">
      <div className="flex items-center gap-[11px]">
        <span>页码: 2</span>
        <span>页面: 2/2</span>
        <span>节: 1/1</span>
        <span>设置值: 4.7厘米</span>
      </div>
      <div className="ml-1 flex items-center gap-1">
        <StatusSep />
        <span>行: 3</span>
        <span className="ml-1">列: 2</span>
        <StatusSep />
        <span className="ml-1">字数: 183</span>
        <StatusSep />
        <span className="h-[7px] w-[7px] border border-[#4a9a30] bg-[#5cb83c]" />
        <span>拼写检查</span>
        <StatusSep />
      </div>
      <span className="ml-3">兼容模式</span>

      <div className="mr-[216px] ml-auto flex h-full items-center">
        <button type="button" aria-label="全屏" className="flex h-full w-[37px] items-center justify-center">
          <Svg w={14} h={14} crisp>
            <path d="M2 2h10v10H2z" fill="#6b6b6b" />
            <path d="M0 3.500V.5h3M11 .5h2.500v3M13.500 11v2.500H11M3 13.500H.5V11" stroke="#6b6b6b" />
          </Svg>
        </button>
        <button type="button" aria-label="页面视图" className="flex h-full w-[37px] items-center justify-center bg-[#c9d9f0]">
          <Svg w={13} h={14} crisp>
            <path d="M0 0h13v14H0z" fill="#6b6b6b" />
            <path d="M2 3.500h9M2 5.500h9M2 7.500h6" stroke="#fff" />
          </Svg>
        </button>
        <button type="button" aria-label="大纲视图" className="flex h-full w-[37px] items-center justify-center">
          <Svg w={13} h={14} crisp>
            <path d="M0 0h13v14H0z" fill="#6b6b6b" />
            <path d="M2 3.500h1M4 3.500h7M2 6.500h1M4 6.500h7M2 9.500h1M4 9.500h7" stroke="#fff" />
          </Svg>
        </button>
        <button type="button" aria-label="Web视图" className="flex h-full w-[37px] items-center justify-center">
          <Svg w={14} h={15}>
            <path d="M0 0h12v14H0z" fill="#6b6b6b" />
            <path d="M2 2.500h8" stroke="#fff" />
            <circle cx="10" cy="10.500" r="4.500" fill="#6b6b6b" stroke="#dedee0" />
            <path d="M7 10l2-2 1 2 3 0M8 13l2-1 1 2" stroke="#dedee0" />
          </Svg>
        </button>
        <button type="button" aria-label="护眼模式" className="flex h-full w-12 items-center justify-center gap-[5px]">
          <Svg w={14} h={14}>
            <path d="M0 0h14v14H0z" fill="#6b6b6b" />
            <circle cx="7" cy="5.500" r="3.300" fill="#eee" />
            <path d="M5.500 8h3v4h-3z" fill="#eee" />
          </Svg>
          <Caret />
        </button>
        <span className="w-[19px] overflow-hidden text-[13px]">120%</span>
      </div>
    </footer>
  );
}

function ImeBar() {
  return (
    <div className="absolute right-0 bottom-0 flex h-7 w-[216px] items-center border border-[#8fafe4] bg-white pl-[3px] text-[#2b74e2]">
      <button type="button" aria-label="输入法" className="flex w-[23px] justify-center">
        <Svg w={20} h={20}>
          <circle cx="10" cy="10" r="10" fill="#2b74e2" />
          <path d="M4 15v-2l2-1c-3-10 11-10 8 0l2 1v2z" fill="#fff" />
        </Svg>
      </button>
      <button type="button" aria-label="中文" className="flex w-[23px] justify-center">
        <Svg w={14} h={14}>
          <path d="M1 4h12v6H1zM7 0v14" stroke="#2b74e2" strokeWidth="2" />
        </Svg>
      </button>
      <button type="button" aria-label="标点" className="flex w-[23px] justify-center">
        <Svg w={14} h={14}>
          <circle cx="3.500" cy="3.500" r="2.200" stroke="#2b74e2" strokeWidth="1.500" />
          <circle cx="10" cy="8.500" r="2.200" fill="#2b74e2" />
          <path d="M11.500 8c0 3-1 4-3 5" stroke="#2b74e2" strokeWidth="1.500" />
        </Svg>
      </button>
      <button type="button" aria-label="表情" className="flex w-[23px] justify-center">
        <Svg w={16} h={16}>
          <circle cx="8" cy="8" r="6.800" stroke="#2b74e2" strokeWidth="1.600" />
          <path d="M4.500 9c1 4 6 4 7 0z" stroke="#2b74e2" strokeWidth="1.200" />
          <path d="M5 5h2v2H5zM9 5h2v2H9z" fill="#2b74e2" />
        </Svg>
      </button>
      <button type="button" aria-label="截图" className="flex w-[23px] justify-center">
        <Svg w={15} h={14}>
          <path d="M1 1l10 9M14 1L4 10" stroke="#2b74e2" strokeWidth="2" />
          <circle cx="3" cy="11" r="2.200" stroke="#2b74e2" strokeWidth="1.600" />
          <circle cx="12" cy="11" r="2.200" stroke="#2b74e2" strokeWidth="1.600" />
        </Svg>
      </button>
      <button type="button" aria-label="软键盘" className="flex w-[23px] justify-center">
        <Svg w={16} h={12}>
          <path d="M1 1h14v10H1z" stroke="#2b74e2" strokeWidth="2" />
          <path d="M3 4h10M3 6.500h10" stroke="#2b74e2" strokeWidth="1.500" strokeDasharray="1.500 1" />
          <path d="M4 9h8" stroke="#2b74e2" strokeWidth="1.200" />
        </Svg>
      </button>
      <button type="button" aria-label="账号" className="flex w-[23px] justify-center">
        <Svg w={12} h={14}>
          <circle cx="6" cy="3.500" r="3.500" fill="#bdd4f7" />
          <path d="M0 14c0-8 12-8 12 0z" fill="#bdd4f7" />
        </Svg>
      </button>
      <button type="button" aria-label="皮肤" className="relative flex w-[23px] justify-center">
        <Svg w={16} h={14}>
          <path d="M4 1c2 2 6 2 8 0l4 3-2 4-2-1v7H4V7L2 8 0 4z" fill="#2b74e2" />
        </Svg>
        <span className="absolute -top-[6px] right-0 h-[7px] w-[7px] rounded-full bg-[#f8532e]" />
      </button>
      <button type="button" aria-label="设置" className="flex w-[23px] justify-center">
        <Svg w={14} h={14}>
          <path d="M5 0h4l1 2.500 3-.5 1.500 3.500L12.500 7l2 1.500L13 12l-3-.5L9 14H5l-1-2.500-3 .5L-.5 8.500l2-1.500-2-1.500L1 2l3 .5z" fill="#2b74e2" />
          <circle cx="7" cy="7" r="2.600" fill="#fff" />
        </Svg>
      </button>
    </div>
  );
}

export default function App() {
  return (
    <div className="relative flex h-screen w-full flex-col overflow-hidden bg-[#c0c3cc] font-['Noto_Sans','Noto_Sans_CJK_SC',sans-serif] text-xs">
      <TitleBar />
      <Ribbon />
      <QuickBar />
      <div className="flex min-h-0 grow">
        <main className="min-w-0 grow overflow-hidden">
          <Page />
        </main>
        <ScrollBar />
        <SidePanel />
      </div>
      <StatusBar />
      <ImeBar />
    </div>
  );
}
